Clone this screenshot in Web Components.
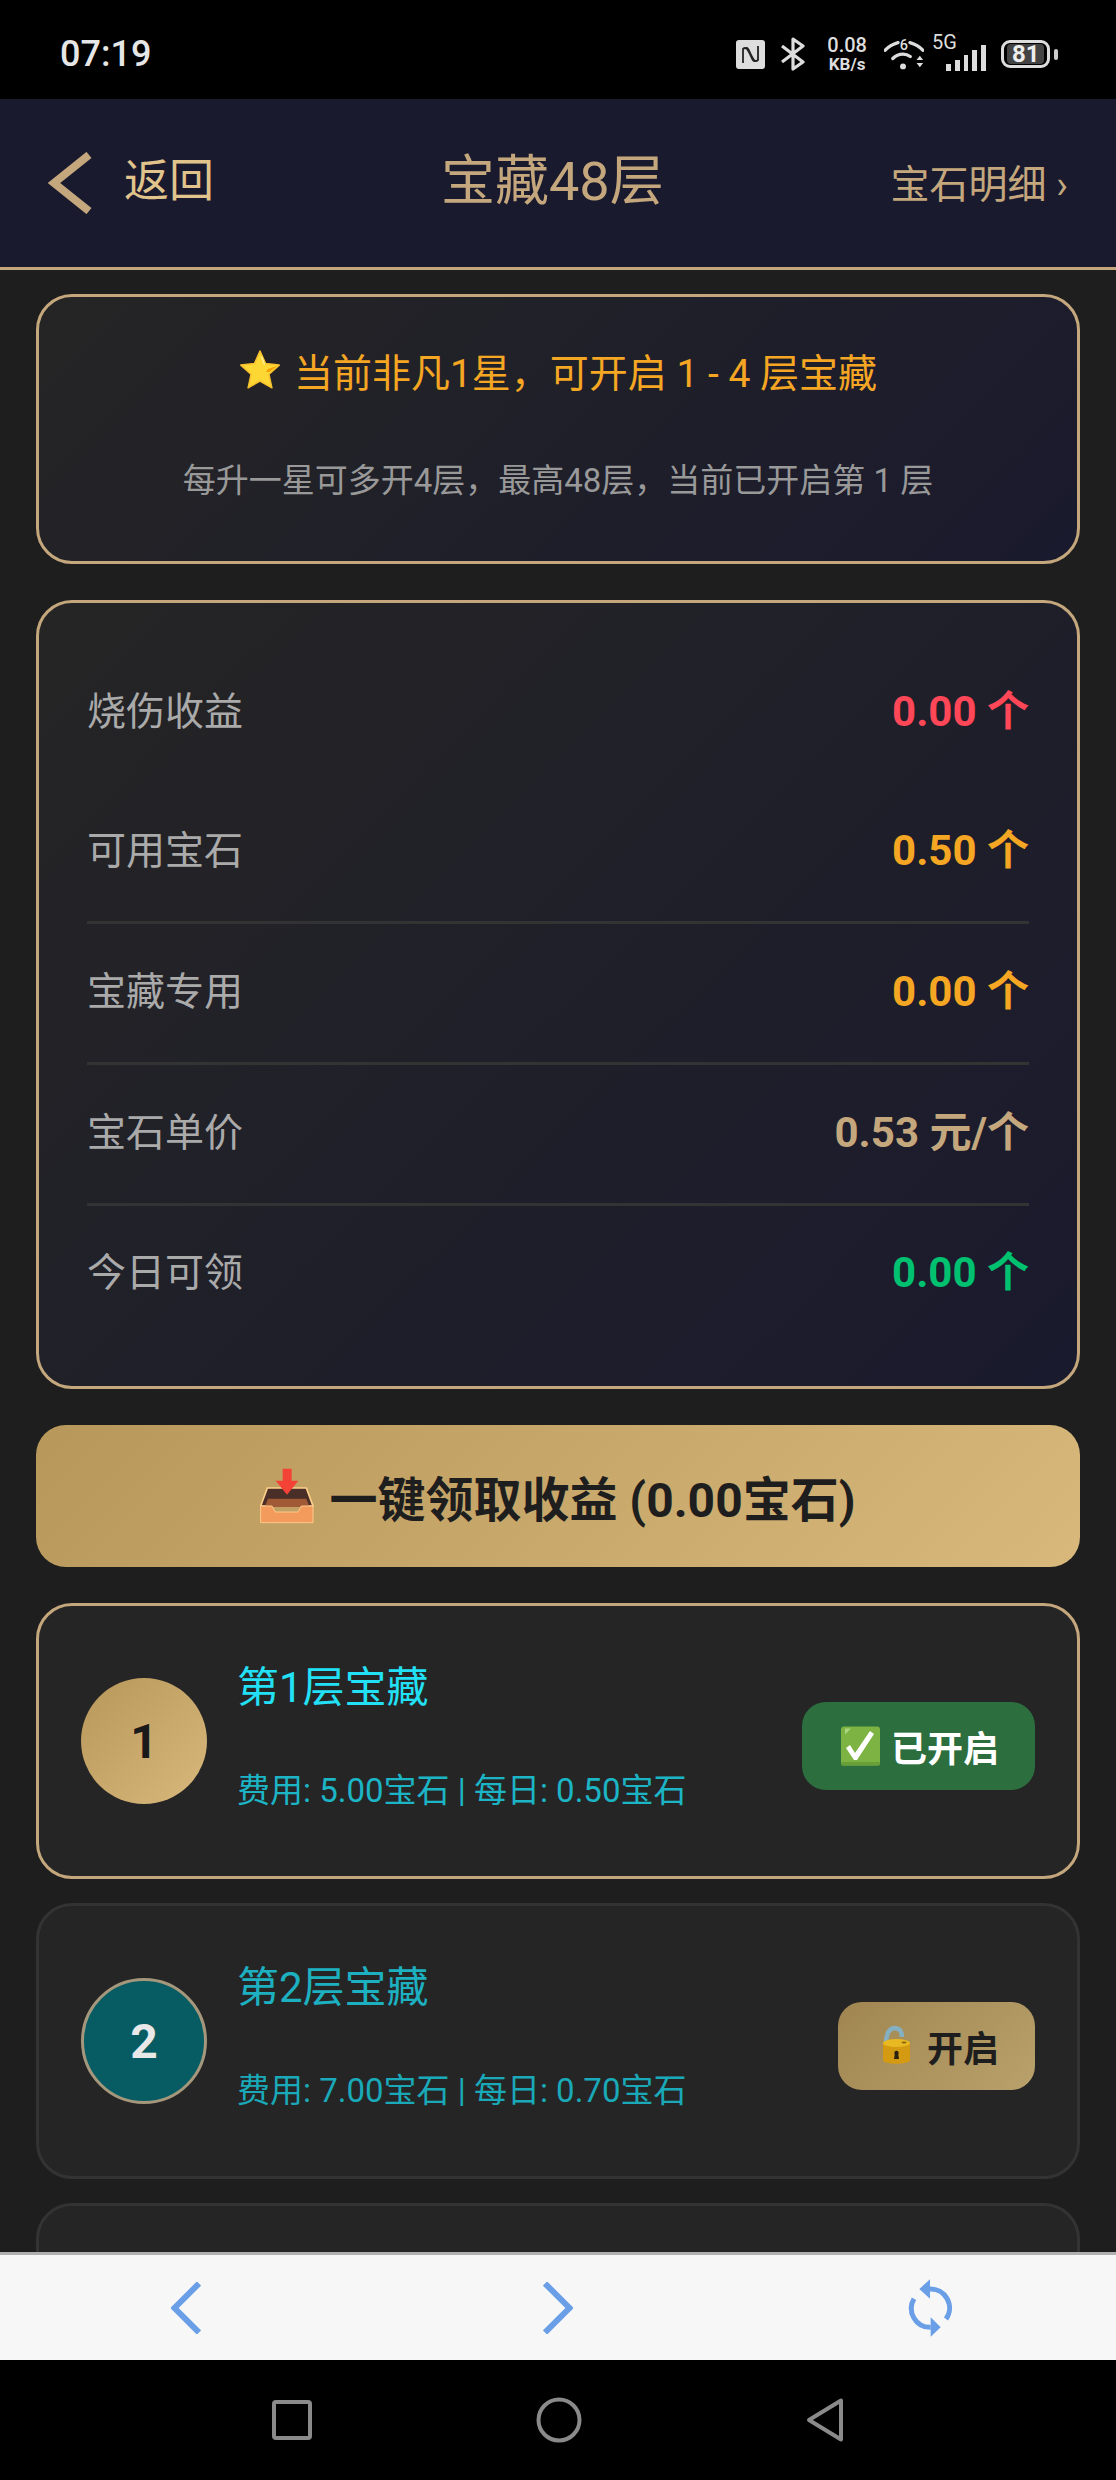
<!DOCTYPE html>
<html lang="zh">
<head>
<meta charset="utf-8">
<title>宝藏48层</title>
<style>
  html, body { margin: 0; height: 2480px; background: #1e1e1e; overflow: hidden; }
  body { font-family: Roboto, "Noto Sans CJK SC", sans-serif; }
</style>
</head>
<body>
<treasure-page>
  <status-bar slot="top"></status-bar>
  <app-header slot="top" title="宝藏48层"></app-header>

  <info-card>
    <span slot="headline">当前非凡1星&#xFF0C;可开启 1 - 4 层宝藏</span>
    每升一星可多开4层&#xFF0C;最高48层&#xFF0C;当前已开启第 1 层
  </info-card>

  <stat-panel>
    <stat-row label="烧伤收益" value="0.00 个" tone="#ff4757" first></stat-row>
    <stat-row label="可用宝石" value="0.50 个" tone="#f5a623"></stat-row>
    <stat-row label="宝藏专用" value="0.00 个" tone="#f5a623"></stat-row>
    <stat-row label="宝石单价" value="0.53 元/个" tone="#c4a77d"></stat-row>
    <stat-row label="今日可领" value="0.00 个" tone="#00c170" last></stat-row>
  </stat-panel>

  <claim-button>一键领取收益 (0.00宝石)</claim-button>

  <tier-card level="1" state="open">
    <span slot="name">第1层宝藏</span>
    <span slot="cost">费用: 5.00宝石 | 每日: 0.50宝石</span>
    <span slot="action">已开启</span>
  </tier-card>
  <tier-card level="2" state="locked">
    <span slot="name">第2层宝藏</span>
    <span slot="cost">费用: 7.00宝石 | 每日: 0.70宝石</span>
    <span slot="action">开启</span>
  </tier-card>
  <tier-card level="3" state="locked">
    <span slot="name">第3层宝藏</span>
    <span slot="cost">费用: 9.00宝石 | 每日: 0.90宝石</span>
    <span slot="action">开启</span>
  </tier-card>

  <browser-bar slot="bottom"></browser-bar>
  <system-nav slot="bottom"></system-nav>
</treasure-page>

<script>
const icons = {
  star: `<svg width="42" height="40" viewBox="0 0 42 40">
      <path d="M21 1l5.6 12.6 13.6 1.5-10.2 9.2 2.9 13.5L21 31l-11.9 6.8 2.9-13.5L1.800 15.100l13.600-1.500z" fill="#fdd835" stroke="#f9c02e" stroke-width="1.500" stroke-linejoin="round"/>
      <path d="M30 22l8-6-9 3-2 3z" fill="#f59f00"/>
      <path d="M22 7l3 8 1-1-3-8z" fill="#fff59d"/>
    </svg>`,
  inbox: `<svg width="54" height="56" viewBox="36 38 162 168">
      <path d="M58 98h117l20 54H38z" fill="#4a2e28" stroke="#ffd08a" stroke-width="5"/>
      <path d="M60 130h115l10 25H50z" fill="#a05a35"/>
      <path d="M38 152h34l10 18h68l10-18h35v50H38z" fill="#f29b5c" stroke="#ffc98a" stroke-width="3"/>
      <path d="M104 40h27v36h20l-34 42-34-42h21z" fill="#f44336"/>
    </svg>`,
  check: `<svg width="42" height="40" viewBox="0 0 42 40">
      <rect x="3" y="0.500" width="39" height="39" rx="3" fill="#7cb342"/>
      <rect x="3" y="36" width="39" height="3.500" rx="1.500" fill="#689f38"/>
      <path d="M7 2.500h6l-6 6z" fill="#aed581"/>
      <path d="M8 22l4-3 5 8L32 5l4 3-17 26h-3z" fill="#fff"/>
    </svg>`,
  lock: `<svg width="42" height="42" viewBox="0 0 42 42">
      <path d="M12 20c0-8 1-16 8-17 6 0 8 4 8 9" fill="none" stroke="#84b0c1" stroke-width="4.500"/>
      <path d="M9 18c0-3 27-3 27 0v17c0 5-27 5-27 0z" fill="#d49b12"/>
      <ellipse cx="22.500" cy="18" rx="13.500" ry="4" fill="#e8b923"/>
      <ellipse cx="30" cy="17.500" rx="2.500" ry="1" fill="#8a6508"/>
      <circle cx="22.500" cy="28" r="2.200" fill="#2b2110"/>
      <path d="M21 28h3l1 6h-5z" fill="#2b2110"/>
    </svg>`
};

class TreasurePage extends HTMLElement {
  constructor() {
    super();
    this.attachShadow({ mode: 'open' }).innerHTML = `
      <style>
        :host { display: flex; flex-direction: column; height: 2480px; color: #fff; }
        main { flex: 1; min-height: 0; overflow: hidden; display: flex; flex-direction: column; padding: 24px 36px 0; gap: 36px; }
        ::slotted(tier-card:not([level="1"])) { margin-top: -12px; }
      </style>
      <slot name="top"></slot>
      <main><slot></slot></main>
      <slot name="bottom"></slot>
    `;
  }
}

class StatusBar extends HTMLElement {
  constructor() {
    super();
    this.attachShadow({ mode: 'open' }).innerHTML = `
      <style>
        :host { display: flex; align-items: center; justify-content: space-between; height: 99px; padding: 9px 58px 0 60px; background: #000; color: #ddd; flex: none; box-sizing: border-box; }
        .time { font-size: 36px; font-weight: 500; color: #e6e6e6; }
        .right { display: flex; align-items: center; }
        svg { display: block; flex: none; }
        .speed { display: flex; flex-direction: column; align-items: center; margin: 0 17px 0 21px; font-weight: 500; }
        .speed b { font-size: 20px; line-height: 19px; font-weight: 500; }
        .speed i { font-size: 17px; line-height: 18px; font-style: normal; font-weight: 700; }
        .net { position: relative; width: 40px; height: 30px; margin-left: 22px; }
        .net span { position: absolute; left: -14px; top: -6px; font-size: 20px; line-height: 19px; }
        .battery { position: relative; box-sizing: border-box; display: flex; align-items: center; justify-content: center; width: 49px; height: 28px; margin-left: 15px; border: 3px solid #ddd; border-radius: 9px; }
        .battery b { background: #444; color: #eee; border-radius: 4px; font-size: 24px; line-height: 20px; font-weight: 700; padding: 0 5px; width: 27px; text-align: center; }
        .nub { width: 4px; height: 11px; background: #ccc; border-radius: 2px; margin-left: 4px; }
      </style>
      <span class="time">07:19</span>
      <div class="right">
        <svg width="29" height="29" viewBox="0 0 29 29">
          <rect width="29" height="29" rx="3" fill="#ddd"/>
          <path d="M7 23V9c3-3 5 1 7 5 2 4 3 8 5 7M22 6v14c-3 3-5-1-7-5-2-4-3-8-5-7" fill="none" stroke="#222" stroke-width="1.800"/>
        </svg>
        <svg width="26" height="34" viewBox="0 0 26 34" style="margin-left:15px">
          <path d="M2 9l21 16-10 7V2l10 7L2 25" fill="none" stroke="#ddd" stroke-width="3.200" stroke-linejoin="round"/>
        </svg>
        <div class="speed"><b>0.08</b><i>KB/s</i></div>
        <svg width="40" height="33" viewBox="0 0 120 100">
          <path d="M3 37C15 24 28 18 42 14M78 14c14 4 27 10 39 23" fill="none" stroke="#ddd" stroke-width="10" stroke-linecap="round"/>
          <path d="M26 62c9-9 20-13 31-13 7 0 15 2 22 7" fill="none" stroke="#ddd" stroke-width="10" stroke-linecap="round"/>
          <circle cx="57" cy="86" r="9" fill="#ddd"/>
          <path d="M108 54l10 13H98zM98 76h20l-10 13z" fill="#ddd"/>
          <text x="60" y="37" font-size="44" font-weight="500" text-anchor="middle" fill="#ddd">6</text>
        </svg>
        <div class="net">
          <span>5G</span>
          <svg width="40" height="26" viewBox="0 0 40 26" style="position:absolute;right:0;bottom:-2px">
            <path d="M0 19h5v7H0zM9 15h5v11H9zM18 10h4v16h-4zM26 5h5v21h-5zM35 0h5v26h-5z" fill="#ddd"/>
          </svg>
        </div>
        <div class="battery"><b>81</b></div>
        <div class="nub"></div>
      </div>
    `;
  }
}

class AppHeader extends HTMLElement {
  constructor() {
    super();
    this.attachShadow({ mode: 'open' }).innerHTML = `
      <style>
        :host { display: flex; align-items: center; justify-content: space-between; flex: none; box-sizing: border-box; height: 171px; padding: 0 48px; background: #1a1a2e; border-bottom: 3px solid #c4a77d; color: #c4a77d; }
        .back { display: flex; align-items: center; gap: 32px; font-size: 45px; color: #e0c48c; }
        .back span { margin: 0 0 11px; }
        h1 { margin: 0 0 13px; font-size: 54px; font-weight: 400; }
        .more { font-size: 39px; margin-bottom: 5px; }
        svg { display: block; }
      </style>
      <div class="back">
        <svg width="44" height="62" viewBox="0 0 44 62"><path d="M41 3L6 31l35 28" fill="none" stroke="#c4a77d" stroke-width="8"/></svg>
        <span>返回</span>
      </div>
      <h1>${this.getAttribute('title')}</h1>
      <span class="more">宝石明细 ›</span>
    `;
  }
}

class InfoCard extends HTMLElement {
  constructor() {
    super();
    this.attachShadow({ mode: 'open' }).innerHTML = `
      <style>
        :host { display: flex; flex-direction: column; align-items: center; flex: none; box-sizing: border-box; height: 270px; padding-top: 48px; border: 3px solid #c4a77d; border-radius: 36px; background: linear-gradient(135deg, #252525, #1a1a2e); }
        .head { display: flex; align-items: center; gap: 13px; height: 50px; font-size: 39px; font-weight: 400; color: #f5a623; }
        .sub { margin-top: 61px; font-size: 33px; line-height: 50px; color: #999; }
        svg { display: block; }
      </style>
      <div class="head">${icons.star}<slot name="headline"></slot></div>
      <div class="sub"><slot></slot></div>
    `;
  }
}

class StatPanel extends HTMLElement {
  constructor() {
    super();
    this.attachShadow({ mode: 'open' }).innerHTML = `
      <style>
        :host { display: flex; flex-direction: column; flex: none; box-sizing: border-box; height: 789px; padding: 42px 48px; border: 3px solid #c4a77d; border-radius: 36px; background: linear-gradient(135deg, #252525, #1a1a2e); }
      </style>
      <slot></slot>
    `;
  }
}

class StatRow extends HTMLElement {
  constructor() {
    super();
    this.attachShadow({ mode: 'open' }).innerHTML = `
      <style>
        :host { display: flex; align-items: center; justify-content: space-between; box-sizing: border-box; height: 141px; padding-bottom: 11px; border-bottom: 3px solid #333; }
        :host([first]) { height: 138px; padding-bottom: 13px; border-bottom: 0; }
        :host([last]) { height: 134px; padding-bottom: 9px; border-bottom: 0; }
        .label { font-size: 39px; color: #aaa; }
        .value { font-size: 42px; font-weight: 700; }
      </style>
      <span class="label">${this.getAttribute('label')}</span>
      <span class="value" style="color:${this.getAttribute('tone')}">${this.getAttribute('value')}</span>
    `;
  }
}

class ClaimButton extends HTMLElement {
  constructor() {
    super();
    this.attachShadow({ mode: 'open' }).innerHTML = `
      <style>
        :host { display: flex; align-items: center; justify-content: center; gap: 15px; flex: none; height: 142px; border-radius: 30px; background: linear-gradient(135deg, #b8975a, #d9b97b); color: #1e1e1e; font-size: 48px; font-weight: 700; }
        svg { display: block; }
      </style>
      ${icons.inbox}<slot></slot>
    `;
  }
}

class TierCard extends HTMLElement {
  constructor() {
    super();
    const open = this.getAttribute('state') === 'open';
    this.attachShadow({ mode: 'open' }).innerHTML = `
      <style>
        :host { display: flex; align-items: center; flex: none; box-sizing: border-box; height: 276px; padding: 0 42px; border: 3px solid #333; border-radius: 36px; background: #252525; }
        :host([state="open"]) { border-color: #c4a77d; }
        .badge { box-sizing: border-box; flex: none; display: flex; align-items: center; justify-content: center; width: 126px; height: 126px; border-radius: 50%; font-size: 48px; font-weight: 700; border: 3px solid #a4977c; background: #065c62; color: #e8e8e8; }
        :host([state="open"]) .badge { border: 0; background: linear-gradient(135deg, #b8975a, #d9b97b); color: #1a1a1a; }
        .info { flex: 1; display: flex; flex-direction: column; gap: 49px; margin: -9px 0 0 30px; }
        .name { font-size: 42px; line-height: 60px; font-weight: 400; color: #1db0c0; }
        :host([state="open"]) .name { color: #22e0f5; }
        .cost { font-size: 33px; line-height: 48px; color: #1aa9b8; }
        :host([state="open"]) .cost { color: #1cb5c6; }
        .action { display: flex; align-items: center; gap: 11px; height: 88px; padding: 0 36px; margin-top: 10px; border-radius: 24px; font-size: 36px; font-weight: 700; color: #1e1e1e; background: linear-gradient(135deg, #a08550, #b9a16b); }
        :host([state="open"]) .action { color: #fff; background: #2d6e3f; }
        svg { display: block; }
      </style>
      <div class="badge">${this.getAttribute('level')}</div>
      <div class="info">
        <div class="name"><slot name="name"></slot></div>
        <div class="cost"><slot name="cost"></slot></div>
      </div>
      <div class="action">${open ? icons.check : icons.lock}<slot name="action"></slot></div>
    `;
  }
}

class BrowserBar extends HTMLElement {
  constructor() {
    super();
    this.attachShadow({ mode: 'open' }).innerHTML = `
      <style>
        :host { display: grid; grid-template-columns: repeat(3, 1fr); place-items: center; flex: none; box-sizing: border-box; height: 108px; border-top: 3px solid #b0b0b0; background: #f7f7f7; }
        svg { display: block; }
      </style>
      <svg width="30" height="52" viewBox="0 0 30 52"><path d="M28 1.500L3.500 26 28 50.500" fill="none" stroke="#6a9fe8" stroke-width="6"/></svg>
      <svg width="30" height="52" viewBox="0 0 30 52"><path d="M2 1.500L26.500 26 2 50.500" fill="none" stroke="#6a9fe8" stroke-width="6"/></svg>
      <svg width="60" height="60" viewBox="30 22 180 180">
        <path d="M118 55A57 57 0 0 1 168 145M72 84a57 57 0 0 0 50 86" fill="none" stroke="#6a9fe8" stroke-width="15"/>
        <path d="M120 26L88 55l32 29zM122 140l30 30-30 28z" fill="#6a9fe8"/>
      </svg>
    `;
  }
}

class SystemNav extends HTMLElement {
  constructor() {
    super();
    this.attachShadow({ mode: 'open' }).innerHTML = `
      <style>
        :host { display: flex; align-items: center; justify-content: center; gap: 224px; flex: none; height: 120px; background: #000; }
        svg { display: block; }
      </style>
      <svg width="40" height="40" viewBox="0 0 40 40"><rect x="2" y="2" width="36" height="36" rx="2" fill="none" stroke="#8a8a8a" stroke-width="4"/></svg>
      <svg width="46" height="46" viewBox="0 0 46 46"><circle cx="23" cy="23" r="20.500" fill="none" stroke="#8a8a8a" stroke-width="4"/></svg>
      <svg width="38" height="46" viewBox="0 0 38 46"><path d="M35 3.500L3 23l32 19.500z" fill="none" stroke="#8a8a8a" stroke-width="4" stroke-linejoin="round"/></svg>
    `;
  }
}

customElements.define('treasure-page', TreasurePage);
customElements.define('status-bar', StatusBar);
customElements.define('app-header', AppHeader);
customElements.define('info-card', InfoCard);
customElements.define('stat-panel', StatPanel);
customElements.define('stat-row', StatRow);
customElements.define('claim-button', ClaimButton);
customElements.define('tier-card', TierCard);
customElements.define('browser-bar', BrowserBar);
customElements.define('system-nav', SystemNav);
</script>
</body>
</html>
